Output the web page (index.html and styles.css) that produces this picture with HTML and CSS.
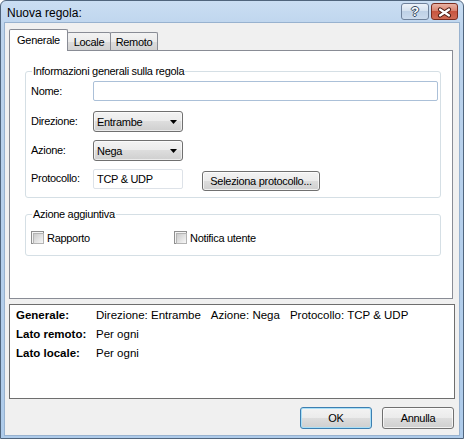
FILE: index.html
```html
<!DOCTYPE html>
<html lang="it">
<head>
<meta charset="utf-8">
<title>Nuova regola</title>
<link rel="stylesheet" href="styles.css">
</head>
<body>
<div class="window">
  <div class="titlebar">
    <span class="title">Nuova regola:</span>
    <div class="caption-buttons">
      <span class="cap-btn help">?</span>
      <span class="cap-btn close">
        <svg width="25" height="15" viewBox="0 0 25 15"><path d="M8 5.5 L17 11.5 M17 5.5 L8 11.5" stroke="#4a1a12" stroke-width="4.2" stroke-linecap="round" fill="none"/><path d="M8 5.5 L17 11.5 M17 5.5 L8 11.5" stroke="#fff" stroke-width="2.2" stroke-linecap="round" fill="none"/></svg>
      </span>
    </div>
  </div>
  <div class="client">
    <div class="tabs">
      <span class="tab tab-generale selected">Generale</span>
      <span class="tab tab-locale">Locale</span>
      <span class="tab tab-remoto">Remoto</span>
    </div>
    <div class="panel">
      <div class="group group-info">
        <span class="legend">Informazioni generali sulla regola</span>
        <div class="row row-nome">
          <span class="label">Nome:</span>
          <span class="textbox textbox-wide"></span>
        </div>
        <div class="row row-dir">
          <span class="label label-up">Direzione:</span>
          <span class="combo"><span>Entrambe</span><svg width="7" height="4" viewBox="0 0 7 4"><polygon points="0,0 7,0 3.5,4" fill="#000"/></svg></span>
        </div>
        <div class="row row-az">
          <span class="label label-up">Azione:</span>
          <span class="combo"><span>Nega</span><svg width="7" height="4" viewBox="0 0 7 4"><polygon points="0,0 7,0 3.5,4" fill="#000"/></svg></span>
        </div>
        <div class="row row-proto">
          <span class="label label-proto">Protocollo:</span>
          <span class="textbox textbox-proto">TCP &amp; UDP</span>
          <button class="btn btn-select">Seleziona protocollo...</button>
        </div>
      </div>
      <div class="group group-extra">
        <span class="legend">Azione aggiuntiva</span>
        <div class="checks">
          <span class="check"><span class="box"></span>Rapporto</span>
          <span class="check"><span class="box"></span>Notifica utente</span>
        </div>
      </div>
    </div>
    <dl class="summary">
      <dt>Generale:</dt>
      <dd class="sum-gen"><span>Direzione: Entrambe</span><span>Azione: Nega</span><span>Protocollo: TCP &amp; UDP</span></dd>
      <dt>Lato remoto:</dt>
      <dd>Per ogni</dd>
      <dt>Lato locale:</dt>
      <dd>Per ogni</dd>
    </dl>
    <div class="actions">
      <button class="btn btn-default">OK</button>
      <button class="btn">Annulla</button>
    </div>
  </div>
</div>
</body>
</html>
```
FILE: styles.css
```css
* { box-sizing: border-box; }
html, body { margin: 0; padding: 0; }
body {
  width: 464px;
  height: 439px;
  overflow: hidden;
  background: #fff;
  font-family: "Liberation Sans", Arial, sans-serif;
  font-size: 11px;
  letter-spacing: -0.3px;
  color: #000;
}
.window {
  width: 464px;
  height: 439px;
  border: 1px solid #50657d;
  border-radius: 6px 6px 0 0;
  background: linear-gradient(#cadef3, #bcd3ec 30px, #aecbea);
  display: flex;
  flex-direction: column;
}
.titlebar {
  height: 21px;
  flex: none;
  display: flex;
  align-items: flex-start;
  padding: 2px 5px 0 6px;
}
.title {
  font-size: 12px;
  letter-spacing: 0;
  line-height: 17px;
  margin-top: 2px;
}
.caption-buttons {
  margin-left: auto;
  display: flex;
  gap: 2px;
}
.cap-btn {
  height: 17px;
  border-radius: 3px;
  display: flex;
  align-items: center;
  justify-content: center;
}
.help {
  width: 28px;
  border: 1px solid #6f819a;
  background: linear-gradient(#edf3f9, #d6e2ef 45%, #bfd1e6 50%, #cbdbed);
  font-weight: bold;
  font-size: 13px;
  letter-spacing: 0;
  line-height: 15px;
  color: #fff;
  text-shadow: 1px 0 #34475e, -1px 0 #34475e, 0 1px #34475e, 0 -1px #34475e;
}
.close {
  width: 27px;
  border: 1px solid #7a2c1e;
  background: linear-gradient(#e9b3a5, #d9836f 45%, #c8553f 50%, #d06c55);
}
.client {
  flex: 1;
  margin: 0 3px 2px;
  border: 1px solid #98b2cf;
  background: #f0f0f0;
  padding: 6px 4px 0 4px;
  display: flex;
  flex-direction: column;
}
.tabs {
  display: flex;
  align-items: flex-end;
  height: 21px;
  flex: none;
}
.tab {
  border: 1px solid #898c95;
  border-bottom: none;
  border-radius: 2px 2px 0 0;
  height: 18px;
  padding-top: 2px;
  line-height: 14px;
  text-align: center;
  background: linear-gradient(#f3f3f3, #ebebeb 50%, #dddddd 50%, #d2d2d2);
  margin-left: -1px;
}
.tab.selected {
  height: 22px;
  padding-top: 3px;
  background: #fff;
  margin-left: 0;
  margin-bottom: -1px;
  position: relative;
  z-index: 1;
}
.tab-generale { width: 59px; }
.tab-locale { width: 44px; }
.tab-remoto { width: 48px; }
.panel {
  flex: none;
  width: 444px;
  height: 249px;
  border: 1px solid #898c95;
  background: #fff;
  padding: 20px 0 0 15px;
}
.group {
  width: 416px;
  border: 1px solid #d5dfe5;
  border-radius: 3px;
  padding: 0 0 6px 5px;
}
.group-extra {
  margin-top: 16px;
  padding-bottom: 11px;
}
.legend {
  display: table;
  margin: -7px 0 0 1px;
  padding: 0 1px;
  line-height: 13px;
  background: #fff;
}
.row {
  display: flex;
  align-items: center;
}
.label {
  width: 62px;
  flex: none;
}
.label-up { margin-bottom: 2px; }
.row-nome { margin-top: 3px; height: 20px; }
.row-dir { margin-top: 10px; height: 21px; }
.row-az { margin-top: 8px; height: 21px; }
.row-proto { margin-top: 8px; height: 22px; align-items: flex-start; }
.label-proto { line-height: 19px; }
.textbox {
  height: 20px;
  border: 1px solid #abc0d8;
  border-radius: 2px;
  background: #fff;
  padding-left: 3px;
  line-height: 18px;
}
.textbox-wide { width: 345px; }
.textbox-proto { width: 90px; border-color: #dde2e8; }
.combo {
  width: 90px;
  height: 21px;
  border: 1px solid #707070;
  border-radius: 3px;
  background: linear-gradient(#f3f3f3, #ebebeb 50%, #dddddd 50%, #cfcfcf);
  box-shadow: inset 0 0 0 1px rgba(255, 255, 255, 0.6);
  display: flex;
  align-items: center;
  padding: 0 5px 0 3px;
}
.combo svg { margin-left: auto; }
.btn {
  font: inherit;
  letter-spacing: inherit;
  color: #000;
  border: 1px solid #707070;
  border-radius: 3px;
  background: linear-gradient(#f3f3f3, #ebebeb 50%, #dddddd 50%, #cfcfcf);
  box-shadow: inset 0 0 0 1px rgba(255, 255, 255, 0.7);
  padding: 0;
  text-align: center;
}
.btn-select {
  margin: 2px 0 0 19px;
  width: 118px;
  height: 20px;
}
.checks {
  display: grid;
  grid-template-columns: 143px auto;
  margin-top: 10px;
}
.check {
  display: flex;
  align-items: center;
  gap: 3px;
  height: 13px;
}
.box {
  width: 13px;
  height: 13px;
  border: 1px solid #8f8f8f;
  background: #f4f4f4;
  padding: 1px;
}
.box::after {
  content: "";
  display: block;
  width: 9px;
  height: 9px;
  border: 1px solid #b4b4b4;
  background: linear-gradient(135deg, #cbcbcb, #f7f7f7);
}
.summary {
  flex: none;
  margin: 5px 0 0;
  width: 446px;
  height: 95px;
  border: 1px solid #6e6e6e;
  background: #fff;
  padding: 1px 0 0 6px;
  font-size: 11.5px;
  letter-spacing: 0;
  line-height: 19px;
  display: grid;
  grid-template-columns: 80px auto;
  align-content: start;
}
.summary dt { font-weight: bold; }
.summary dd { margin: 0; }
.sum-gen { display: flex; gap: 10px; }
.actions {
  margin-top: 8px;
  display: flex;
  justify-content: flex-end;
  gap: 10px;
  padding-right: 1px;
}
.actions .btn {
  width: 72px;
  height: 22px;
}
.btn-default {
  border-color: #3c7fb1;
  box-shadow: inset 0 0 0 1px #a9dff7;
}
```
